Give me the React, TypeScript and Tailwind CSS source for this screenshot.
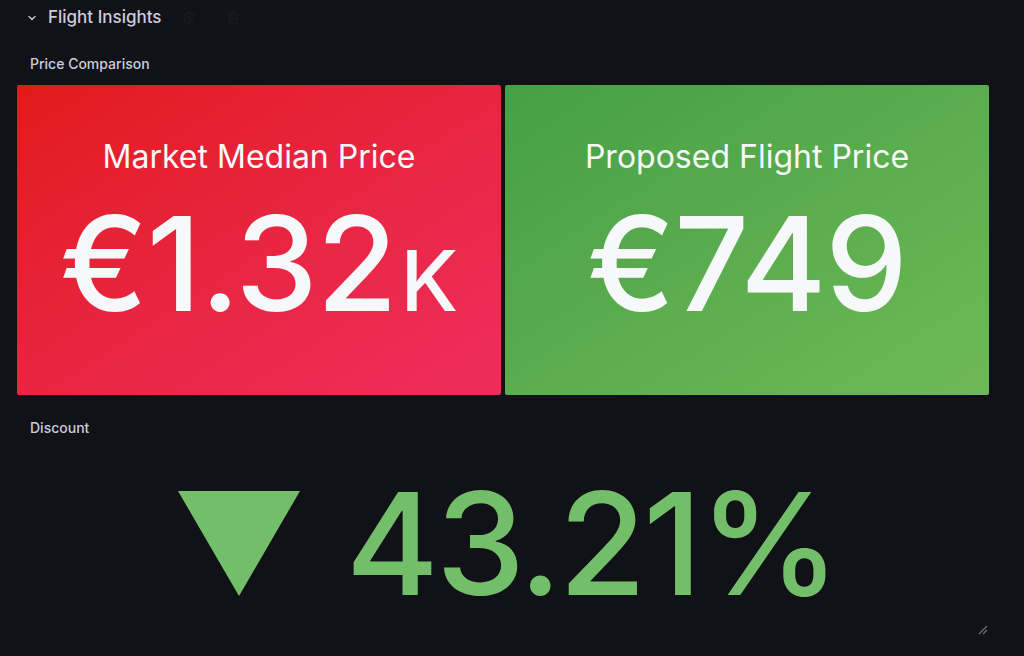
import { ChevronDown, Settings, Trash2 } from "lucide-react";

function StatBox({
  title,
  value,
  unit,
  bg,
}: {
  title: string;
  value: string;
  unit?: string;
  bg: string;
}) {
  return (
    <div className={`flex-1 flex flex-col items-center rounded-[2px] text-[#f7f8fa] ${bg}`}>
      <div className="mt-[52px] text-[32px] leading-[40px]">{title}</div>
      <div className="mt-[21px] flex items-baseline leading-none">
        <span className="text-[131px] font-medium tracking-[-1px]">{value}</span>
        {unit && <span className="text-[84px] font-medium ml-[4px]">{unit}</span>}
      </div>
    </div>
  );
}

export default function App() {
  return (
    <div
      className="w-[1024px] h-[656px] overflow-hidden bg-[#111217] text-[#ccccdc]"
      style={{ fontFamily: "Inter, 'Noto Sans', sans-serif" }}
    >
      {/* row header */}
      <div className="h-[35px] flex items-center pl-[26px]">
        <ChevronDown size={12} strokeWidth={2.5} className="text-[#ccccdc]" />
        <span className="ml-[10px] text-[17px] font-medium">Flight Insights</span>
        <Settings size={14} className="ml-[20px] text-[#1a1c22]" />
        <Trash2 size={14} className="ml-[30px] text-[#1a1c22]" />
      </div>

      {/* price comparison */}
      <div className="ml-[17px] w-[972px]">
        <div className="h-[50px] flex items-end pb-[11px] pl-[13px] text-[14px] font-medium">
          Price Comparison
        </div>
        <div className="h-[310px] flex gap-[4px]">
          <StatBox
            title="Market Median Price"
            value="€1.32"
            unit="K"
            bg="bg-gradient-to-br from-[#e21a18] to-[#ef2d5c]"
          />
          <StatBox
            title="Proposed Flight Price"
            value="€749"
            bg="bg-gradient-to-br from-[#45a045] to-[#6eb957]"
          />
        </div>
      </div>

      {/* discount */}
      <div className="ml-[17px] w-[975px] h-[250px] relative">
        <div className="h-[45px] flex items-end pb-[2px] pl-[13px] text-[14px] font-medium">
          Discount
        </div>
        <div className="flex items-center justify-center gap-[46px] mt-[32px] pl-[6px]">
          <svg width="122" height="105" viewBox="0 0 122 105">
            <polygon points="0,0 122,0 61,105" fill="#73bf69" />
          </svg>
          <span className="text-[142px] leading-none font-medium tracking-[-3px] text-[#73bf69]">
            43.21%
          </span>
        </div>
        <svg
          className="absolute right-[4px] bottom-[10px]"
          width="10"
          height="10"
          viewBox="0 0 10 10"
        >
          <path d="M1 9 L9 1 M5 9 L9 5" stroke="#6e6f75" strokeWidth="1.2" />
        </svg>
      </div>
    </div>
  );
}
